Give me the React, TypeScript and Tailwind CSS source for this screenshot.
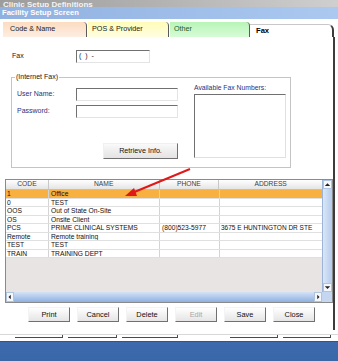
import React from "react";

const rows = [
  { code: "1", name: "Office", phone: "", addr: "", sel: true },
  { code: "0", name: "TEST", phone: "", addr: "" },
  { code: "OOS", name: "Out of State On-Site", phone: "", addr: "" },
  { code: "OS", name: "Onsite Client", phone: "", addr: "" },
  { code: "PCS", name: "PRIME CLINICAL SYSTEMS", phone: "(800)523-5977", addr: "3675 E HUNTINGTON DR STE" },
  { code: "Remote", name: "Remote training", phone: "", addr: "" },
  { code: "TEST", name: "TEST", phone: "", addr: "" },
  { code: "TRAIN", name: "TRAINING DEPT", phone: "", addr: "" },
];

const Tri = ({ dir }: { dir: "up" | "down" | "left" | "right" }) => {
  const pts =
    dir === "up" ? "1,5 4,2 7,5" : dir === "down" ? "1,2 4,5 7,2" : dir === "left" ? "5,1 2,4 5,7" : "3,1 6,4 3,7";
  return (
    <svg width="8" height="8" viewBox="0 0 8 8">
      <polygon points={pts} fill="#202020" />
    </svg>
  );
};

const Btn = ({ label, disabled }: { label: string; disabled?: boolean }) => (
  <div
    className={`w-[42px] h-[15px] flex items-center justify-center text-[7.4px] bg-gradient-to-b from-[#ffffff] to-[#e6e4e4] border border-t-[#f4f4f4] border-l-[#f4f4f4] border-r-[#707070] border-b-[#707070] ${
      disabled ? "text-[#a8a8a8]" : "text-[#101010]"
    }`}
  >
    {label}
  </div>
);

export default function App() {
  return (
    <div className="w-[338px] h-[361px] overflow-hidden bg-white flex flex-col font-['Liberation_Sans',Arial,sans-serif] relative">
      {/* window title (cut) */}
      <div className="h-[7px] overflow-hidden bg-gradient-to-r from-[#9c9c9c] via-[#b4b4b4] to-[#cfcfcf] flex items-end">
        <span className="text-[8px] leading-[8px] font-bold text-[#f4f4f4] pl-[3px] translate-y-[2px]">Clinic Setup Definitions</span>
      </div>
      {/* screen caption */}
      <div className="h-[12px] bg-gradient-to-r from-[#90b0e0] to-[#abc9f0] flex items-center">
        <span className="text-[7.6px] leading-[8px] font-bold text-white pl-[2px]">Facility Setup Screen</span>
      </div>

      {/* main panel */}
      <div className="h-[311px] flex flex-col w-[335px]">
        {/* tabs */}
        <div className="flex h-[18px] pt-[3px]">
          <div className="ml-[3px] w-[84px] h-[15px] bg-gradient-to-b from-[#fbdcc0] to-[#fdeee2] border-r border-[#5a5a5a] rounded-tr-[4px] flex items-center pl-[7px] text-[7.2px] text-[#202020]">
            Code &amp; Name
          </div>
          <div className="ml-[1px] w-[81px] h-[15px] bg-gradient-to-b from-[#fffcb8] to-[#fffee0] border-r border-[#5a5a5a] rounded-tr-[4px] flex items-center pl-[4px] text-[7.2px] text-[#202020]">
            POS &amp; Provider
          </div>
          <div className="ml-[1px] w-[80px] h-[15px] bg-gradient-to-b from-[#b8f4b8] to-[#d6fcd6] border-r border-[#4a6a4a] rounded-tr-[4px] flex items-center pl-[4px] text-[7.2px] text-[#1c5a1c]">
            Other
          </div>
          <div className="w-[84px] h-[13px] mt-[2px] bg-white border-t border-t-[#c8c8c8] border-r-2 border-r-[#3c3c3c] rounded-tr-[6px] flex items-center pl-[6px] text-[7.6px] font-bold text-black">
            Fax
          </div>
        </div>

        {/* tab body */}
        <div className="flex-1 flex flex-col border-r-2 border-[#3c3c3c]">
          {/* Fax row */}
          <div className="flex items-center mt-[13px] pl-[12px] h-[13px]">
            <span className="w-[64px] text-[7px] text-[#202020]">Fax</span>
            <div className="w-[74px] h-[13px] border border-t-[#707070] border-l-[#707070] border-r-[#e4e4e4] border-b-[#e4e4e4] bg-white flex items-center pl-[2px] text-[7px] text-[#202020]">
              (&nbsp;&nbsp;)&nbsp;&nbsp;-
            </div>
          </div>

          {/* Internet Fax group */}
          <fieldset className="ml-[11px] mt-[10px] w-[280px] h-[95px] border border-[#c4c4c4] px-0 pb-0 flex">
            <legend className="ml-[3px] px-[1px] text-[7px] leading-[8px] text-[#202020]">(Internet Fax)</legend>
            <div className="flex w-full">
              <div className="w-[166px] flex flex-col pt-[7px]">
                <div className="flex items-center h-[13px]">
                  <span className="w-[64px] pl-[5px] text-[7px] text-[#30307a]">User Name:</span>
                  <div className="w-[102px] h-[13px] border border-t-[#707070] border-l-[#707070] border-r-[#e4e4e4] border-b-[#e4e4e4] bg-white" />
                </div>
                <div className="flex items-center h-[13px] mt-[4px]">
                  <span className="w-[64px] pl-[5px] text-[7px] text-[#30307a]">Password:</span>
                  <div className="w-[102px] h-[13px] border border-t-[#707070] border-l-[#707070] border-r-[#e4e4e4] border-b-[#e4e4e4] bg-white" />
                </div>
                <div className="flex justify-end mt-[25px]">
                  <div className="w-[75px] h-[16px] flex items-center justify-center text-[7.2px] text-[#101010] bg-gradient-to-b from-[#fafafa] to-[#e4e2e2] border border-t-[#f0f0f0] border-l-[#f0f0f0] border-r-[#707070] border-b-[#707070]">
                    Retrieve Info.
                  </div>
                </div>
              </div>
              <div className="ml-[16px] w-[92px] flex flex-col pt-[3px]">
                <span className="text-[6.8px] leading-[8px] text-[#30307a]">Available Fax Numbers:</span>
                <div className="mt-[2px] w-[92px] h-[64px] border border-t-[#707070] border-l-[#707070] border-r-[#e0e0e0] border-b-[#e0e0e0] bg-white" />
              </div>
            </div>
          </fieldset>

          {/* Grid */}
          <div className="ml-[5px] mt-[11px] h-[124px] border border-[#8a8a8a] flex flex-col text-[6.7px] text-[#101010]">
            <div className="flex flex-1 min-h-0">
              <div className="flex-1 flex flex-col bg-[#e8e4e4] overflow-hidden">
                <div className="flex h-[10px] bg-gradient-to-b from-[#ffffff] to-[#e4e4e4] border-b border-[#c0c0c0] text-[#404040]">
                  <div className="w-[43px] border-r border-[#c8c8c8] flex items-center justify-center">CODE</div>
                  <div className="w-[111px] border-r border-[#c8c8c8] flex items-center justify-center">NAME</div>
                  <div className="w-[60px] border-r border-[#c8c8c8] flex items-center justify-center">PHONE</div>
                  <div className="w-[103px] flex items-center justify-center">ADDRESS</div>
                </div>
                {rows.map((r, i) => (
                  <div
                    key={i}
                    className={`flex h-[8.5px] leading-[8px] border-b border-[#e0e0e0] ${r.sel ? "bg-[#f8b040]" : "bg-white"}`}
                  >
                    <div className="w-[43px] shrink-0 border-r border-[#d4d4d4] pl-[1px] overflow-hidden whitespace-nowrap">{r.code}</div>
                    <div className="w-[111px] shrink-0 border-r border-[#d4d4d4] pl-[2px] overflow-hidden whitespace-nowrap">{r.name}</div>
                    <div className="w-[60px] shrink-0 border-r border-[#d4d4d4] pl-[2px] overflow-hidden whitespace-nowrap">{r.phone}</div>
                    <div className="w-[103px] shrink-0 pl-[1px] overflow-hidden whitespace-nowrap text-[6.5px]">{r.addr}</div>
                  </div>
                ))}
              </div>
              {/* vertical scrollbar */}
              <div className="w-[10px] flex flex-col justify-between bg-gradient-to-r from-[#dbe7f8] to-[#b4cbec] border-l border-[#9cb4d8]">
                <div className="h-[9px] bg-[#f4f7fc] border border-[#b0c4e0] flex items-center justify-center">
                  <Tri dir="up" />
                </div>
                <div className="h-[9px] bg-[#f4f7fc] border border-[#b0c4e0] flex items-center justify-center">
                  <Tri dir="down" />
                </div>
              </div>
            </div>
            {/* horizontal scrollbar */}
            <div className="flex h-[10px]">
              <div className="flex-1 flex bg-gradient-to-b from-[#d4e2f6] to-[#8eb0e0]">
                <div className="w-[8px] bg-[#f4f7fc] border border-[#b0c4e0] flex items-center justify-center">
                  <Tri dir="left" />
                </div>
                <div className="flex-1" />
                <div className="w-[8px] bg-[#f4f7fc] border border-[#b0c4e0] flex items-center justify-center">
                  <Tri dir="right" />
                </div>
              </div>
              <div className="w-[10px] bg-[#c4d6f0]" />
            </div>
          </div>

          {/* buttons */}
          <div className="flex gap-[7px] pl-[28px] mt-[4px]">
            <Btn label="Print" />
            <Btn label="Cancel" />
            <Btn label="Delete" />
            <Btn label="Edit" disabled />
            <Btn label="Save" />
            <Btn label="Close" />
          </div>
        </div>
      </div>

      {/* bottom tab strip */}
      <div className="h-[12px] bg-white flex flex-col">
        <div className="h-[5px] border-b border-[#d8d8d8]" />
        <div className="h-[4px] flex">
          <div className="ml-[15px] w-[48px] h-[3px] border-b border-r border-[#4a4a4a]" />
          <div className="ml-[5px] w-[49px] h-[3px] border-b border-r border-[#4a4a4a]" />
          <div className="ml-[5px] w-[56px] h-[3px] border-b border-r border-[#4a4a4a]" />
          <div className="ml-[52px] w-[48px] h-[3px] border-b border-r border-[#4a4a4a]" />
          <div className="ml-[5px] w-[48px] h-[3px] border-b border-r border-[#4a4a4a]" />
        </div>
        <div className="flex-1 border-b border-[#505050]" />
      </div>
      <div className="flex-1 bg-gradient-to-b from-[#3c6aac] to-[#3a67a8]" />

      {/* red annotation arrow */}
      <svg className="absolute left-0 top-0 pointer-events-none" width="338" height="361">
        <line x1="190" y1="169" x2="132" y2="193" stroke="#e01818" strokeWidth="2" />
        <polygon points="125,196 134,188 137,196" fill="#e01818" />
      </svg>
    </div>
  );
}
